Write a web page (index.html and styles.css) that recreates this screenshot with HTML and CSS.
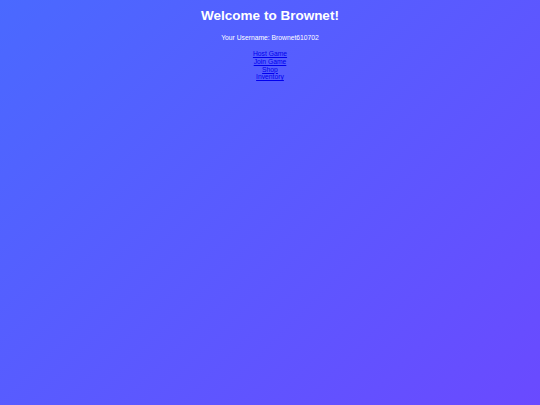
FILE: index.html
```html
<!DOCTYPE html>
<html>
<head>
<meta charset="utf-8">
<title>Brownet</title>
<link rel="stylesheet" href="styles.css">
</head>
<body>
<main class="page">
  <h1 class="title">Welcome to Brownet!</h1>
  <p class="username">Your Username: Brownet610702</p>
  <nav class="menu">
    <a href="#" class="menu-link">Host Game</a>
    <a href="#" class="menu-link">Join Game</a>
    <a href="#" class="menu-link">Shop</a>
    <a href="#" class="menu-link">Inventory</a>
  </nav>
</main>
</body>
</html>
```
FILE: styles.css
```css
html, body {
  margin: 0;
  padding: 0;
  height: 100%;
}
body {
  background: linear-gradient(135deg, #4a69ff 0%, #6a4aff 100%);
  font-family: "Liberation Sans", Arial, sans-serif;
  color: #ffffff;
}
.page {
  padding-top: 8.4px;
  text-align: center;
}
.title {
  margin: 0;
  font-size: 13.5px;
  font-weight: bold;
  line-height: 15.5px;
}
.username {
  margin: 10.5px 0 0;
  font-size: 6.75px;
  line-height: 7.8px;
}
.menu {
  margin-top: 8.3px;
  display: flex;
  flex-direction: column;
  align-items: center;
}
.menu-link {
  font-size: 6.75px;
  line-height: 7.55px;
  color: #0000ee;
}
```
